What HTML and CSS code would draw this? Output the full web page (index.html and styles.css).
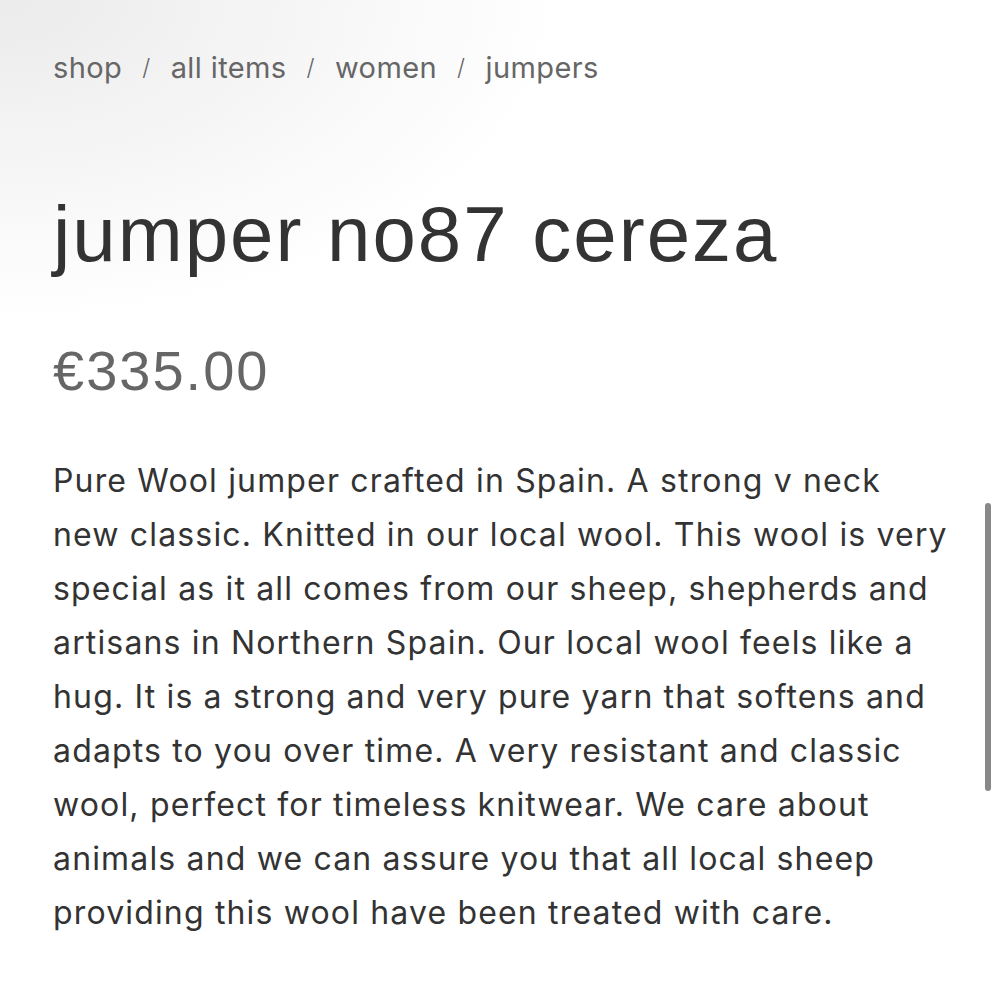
FILE: index.html
```html
<!DOCTYPE html>
<html lang="en">
<head>
    <meta charset="UTF-8">
    <meta name="viewport" content="width=device-width, initial-scale=1.0">
    <title>jumper no87 cereza</title>
    <link rel="stylesheet" href="styles.css">
</head>
<body>

    <div class="product-page">
        <nav class="breadcrumb">
            <a href="#">shop</a>
            <span class="sep">/</span>
            <a href="#">all items</a>
            <span class="sep">/</span>
            <a href="#">women</a>
            <span class="sep">/</span>
            <a href="#">jumpers</a>
        </nav>

        <h1 class="product-title">jumper no87 cereza</h1>

        <div class="product-price">€335.00</div>

        <p class="product-description">
            Pure Wool jumper crafted in Spain. A strong v neck new classic. Knitted in our local wool. This wool is very special as it all comes from our sheep, shepherds and artisans in Northern Spain. Our local wool feels like a hug. It is a strong and very pure yarn that softens and adapts to you over time. A very resistant and classic wool, perfect for timeless knitwear. We care about animals and we can assure you that all local sheep providing this wool have been treated with care.
        </p>
    </div>

    <div class="scroll-thumb"></div>

</body>
</html>
```

FILE: styles.css
```css
body {
    margin: 0;
    padding: 0;
    min-height: 1000px;
    background: radial-gradient(ellipse 560px 320px at 0 0, #ebebeb 0%, #f6f6f6 55%, #ffffff 100%);
    background-color: #fff;
    color: #333;
    font-family: Inter, "Liberation Sans", sans-serif;
    overflow: hidden;
}

.product-page {
    padding: 50px 40px 0 53px;
}

.breadcrumb {
    font-size: 29px;
    letter-spacing: 0.4px;
    color: #666;
    display: flex;
    align-items: center;
    gap: 20px;
}

.breadcrumb a {
    color: inherit;
    text-decoration: none;
}

.breadcrumb .sep {
    font-size: 23px;
    font-weight: 300;
}

.product-title {
    font-family: "Liberation Sans", Arial, sans-serif;
    font-weight: normal;
    font-size: 78px;
    letter-spacing: 2px;
    color: #333;
    margin: 107px 0 0;
    line-height: 1.1;
}

.product-price {
    font-family: "Liberation Sans", Arial, sans-serif;
    font-size: 56px;
    letter-spacing: 2px;
    color: #666;
    margin-top: 62px;
    line-height: 1.1;
}

.product-description {
    font-size: 32px;
    letter-spacing: 1.16px;
    line-height: 54px;
    color: #333;
    margin: 53px 0 0;
    max-width: 897px;
}

.scroll-thumb {
    position: absolute;
    top: 503px;
    right: 9px;
    width: 6px;
    height: 288px;
    border-radius: 3px;
    background: #888;
}
```
